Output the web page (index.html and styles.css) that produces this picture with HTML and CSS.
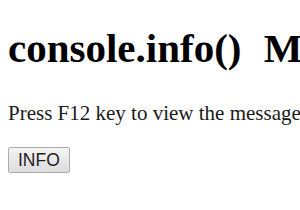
FILE: index.html
```html
<!DOCTYPE html>
<html>
<head>
<meta charset="utf-8">
<link rel="stylesheet" href="styles.css">
</head>
<body class="page">
<main class="content">
<h1 class="title">console.info() Method</h1>
<p class="text">Press F12 key to view the message</p>
<button class="btn">INFO</button>
</main>
</body>
</html>
```
FILE: styles.css
```css
html, body { overflow: hidden; }
.page {
  margin: 0;
  font-family: "Liberation Serif", serif;
  color: #111;
  background: #fff;
  white-space: nowrap;
}
.content {
  display: flow-root;
  padding: 0 8px;
}
.title {
  font-size: 41px;
  font-weight: bold;
  word-spacing: 12px;
  color: #000;
  margin: 25px 0 30px;
  line-height: 46px;
}
.text {
  font-size: 21px;
  margin: 0 0 22px;
  line-height: 24px;
  color: #1a1a1a;
}
.btn {
  display: block;
  font-family: "Liberation Sans", sans-serif;
  font-size: 17.5px;
  line-height: 20px;
  color: #222;
  padding: 2px 9px;
  border: 1px solid #acacac;
  border-radius: 2px;
  background: linear-gradient(#f4f4f4, #dddddd);
}
```
